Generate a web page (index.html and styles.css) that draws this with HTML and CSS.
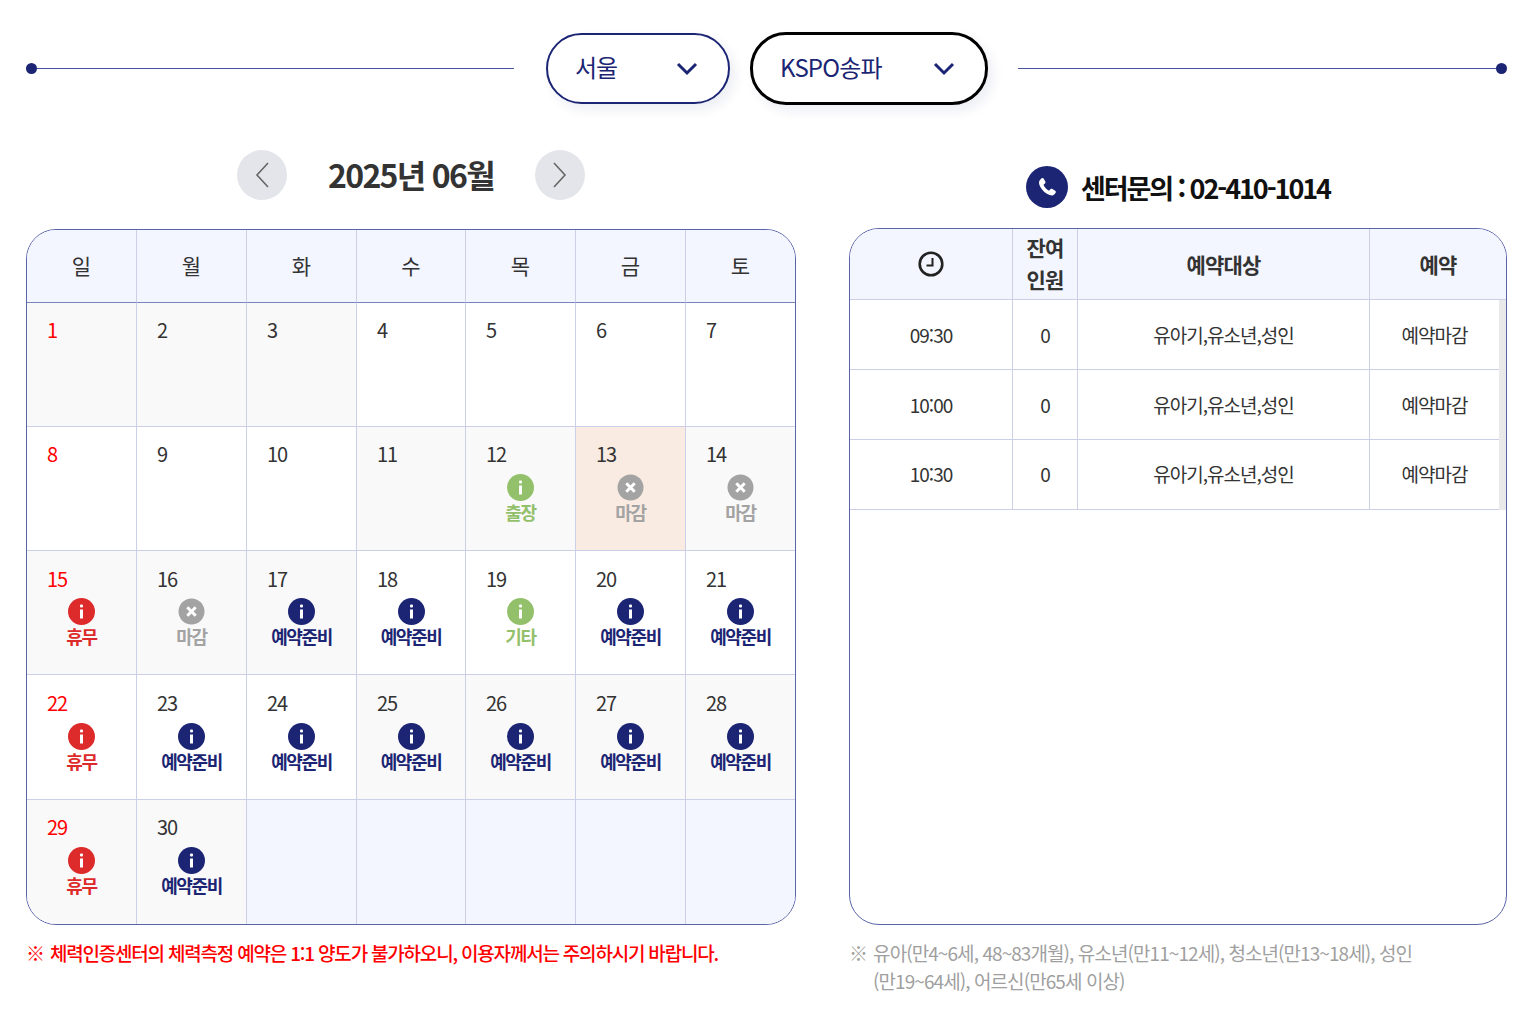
FILE: index.html
```html
<!DOCTYPE html>
<html lang="ko">
<head>
  <meta charset="UTF-8" />
  <meta name="viewport" content="width=device-width, initial-scale=1.0">
  <title>체력측정 예약</title>
  <link rel="stylesheet" href="styles.css">
</head>
<body>

  <svg class="defs" width="0" height="0">
    <symbol id="ico-info" viewBox="0 0 27 27">
      <circle cx="13.500" cy="13.500" r="13.500" fill="currentColor"/>
      <rect x="12" y="6.500" width="3" height="3" rx="1" fill="#fff"/>
      <rect x="12" y="11.500" width="3" height="9" fill="#fff"/>
    </symbol>
    <symbol id="ico-closed" viewBox="0 0 27 27">
      <circle cx="13.500" cy="13.500" r="13" fill="currentColor"/>
      <path d="M9.300 9.300l8.400 8.400M17.700 9.300l-8.400 8.400" fill="none" stroke="#fff" stroke-width="3"/>
    </symbol>
  </svg>

  <div class="select-row">
    <div class="select-line left"></div>
    <div class="select-box">
      <span>서울</span>
      <svg width="22" height="14" viewBox="0 0 22 14"><path d="M2 2l9 9 9-9" fill="none" stroke="#1b2573" stroke-width="3"/></svg>
    </div>
    <div class="select-box focus">
      <span>KSPO송파</span>
      <svg width="22" height="14" viewBox="0 0 22 14"><path d="M2 2l9 9 9-9" fill="none" stroke="#1b2573" stroke-width="3"/></svg>
    </div>
    <div class="select-line right"></div>
  </div>

  <main class="content">
    <section class="cal-side">
      <div class="month-bar">
        <a class="month-btn"><svg width="18" height="28" viewBox="0 0 18 28"><path d="M15 2L4 14l11 12" fill="none" stroke="#666" stroke-width="1.6"/></svg></a>
        <h2>2025년 06월</h2>
        <a class="month-btn"><svg width="18" height="28" viewBox="0 0 18 28"><path d="M3 2l11 12L3 26" fill="none" stroke="#666" stroke-width="1.6"/></svg></a>
      </div>

      <div class="calendar">
        <div class="cal-head">일</div>
        <div class="cal-head">월</div>
        <div class="cal-head">화</div>
        <div class="cal-head">수</div>
        <div class="cal-head">목</div>
        <div class="cal-head">금</div>
        <div class="cal-head">토</div>

        <div class="day gray sun"><b>1</b></div>
        <div class="day gray"><b>2</b></div>
        <div class="day gray"><b>3</b></div>
        <div class="day"><b>4</b></div>
        <div class="day"><b>5</b></div>
        <div class="day"><b>6</b></div>
        <div class="day"><b>7</b></div>

        <div class="day sun"><b>8</b></div>
        <div class="day"><b>9</b></div>
        <div class="day"><b>10</b></div>
        <div class="day gray"><b>11</b></div>
        <div class="day gray"><b>12</b><svg class="mark green"><use href="#ico-info"/></svg><em class="green">출장</em></div>
        <div class="day today"><b>13</b><svg class="mark closed"><use href="#ico-closed"/></svg><em class="closed">마감</em></div>
        <div class="day gray"><b>14</b><svg class="mark closed"><use href="#ico-closed"/></svg><em class="closed">마감</em></div>

        <div class="day gray sun"><b>15</b><svg class="mark red"><use href="#ico-info"/></svg><em class="red">휴무</em></div>
        <div class="day gray"><b>16</b><svg class="mark closed"><use href="#ico-closed"/></svg><em class="closed">마감</em></div>
        <div class="day gray"><b>17</b><svg class="mark navy"><use href="#ico-info"/></svg><em class="navy">예약준비</em></div>
        <div class="day"><b>18</b><svg class="mark navy"><use href="#ico-info"/></svg><em class="navy">예약준비</em></div>
        <div class="day"><b>19</b><svg class="mark green"><use href="#ico-info"/></svg><em class="green">기타</em></div>
        <div class="day"><b>20</b><svg class="mark navy"><use href="#ico-info"/></svg><em class="navy">예약준비</em></div>
        <div class="day"><b>21</b><svg class="mark navy"><use href="#ico-info"/></svg><em class="navy">예약준비</em></div>

        <div class="day sun"><b>22</b><svg class="mark red"><use href="#ico-info"/></svg><em class="red">휴무</em></div>
        <div class="day"><b>23</b><svg class="mark navy"><use href="#ico-info"/></svg><em class="navy">예약준비</em></div>
        <div class="day"><b>24</b><svg class="mark navy"><use href="#ico-info"/></svg><em class="navy">예약준비</em></div>
        <div class="day gray"><b>25</b><svg class="mark navy"><use href="#ico-info"/></svg><em class="navy">예약준비</em></div>
        <div class="day gray"><b>26</b><svg class="mark navy"><use href="#ico-info"/></svg><em class="navy">예약준비</em></div>
        <div class="day gray"><b>27</b><svg class="mark navy"><use href="#ico-info"/></svg><em class="navy">예약준비</em></div>
        <div class="day gray"><b>28</b><svg class="mark navy"><use href="#ico-info"/></svg><em class="navy">예약준비</em></div>

        <div class="day gray sun"><b>29</b><svg class="mark red"><use href="#ico-info"/></svg><em class="red">휴무</em></div>
        <div class="day gray"><b>30</b><svg class="mark navy"><use href="#ico-info"/></svg><em class="navy">예약준비</em></div>
        <div class="day empty"></div>
        <div class="day empty"></div>
        <div class="day empty"></div>
        <div class="day empty"></div>
        <div class="day empty"></div>
      </div>

      <p class="cal-note"><span>※</span> 체력인증센터의 체력측정 예약은 1:1 양도가 불가하오니, 이용자께서는 주의하시기 바랍니다.</p>
    </section>

    <section class="time-side">
      <div class="contact">
        <span class="phone-icon">
          <svg width="24" height="24" viewBox="0 0 24 24"><path d="M6.600 3.200c.7-.5 1.600-.3 2 .4l1.700 3c.4.6.2 1.300-.3 1.800L8.800 9.500c-.2.2-.3.5-.1.8.9 1.900 2.900 4.100 4.900 5.100.3.2.6.1.8-.1l1.200-1.200c.5-.5 1.200-.6 1.800-.2l2.800 1.800c.7.4.9 1.300.4 2-.8 1.200-2 2.800-3.700 2.700C11 20 4.400 13.200 4 8c-.1-2 1.300-3.800 2.600-4.800z" fill="#fff"/></svg>
        </span>
        <strong>센터문의 : 02-410-1014</strong>
      </div>

      <div class="time-table">
        <div class="time-head">
          <div class="tc c1">
            <svg width="28" height="28" viewBox="0 0 28 28"><circle cx="14" cy="14" r="11.300" fill="none" stroke="#222" stroke-width="2.600"/><path d="M15.500 8v7.500H9.500" fill="none" stroke="#222" stroke-width="2"/></svg>
          </div>
          <div class="tc c2">잔여<br>인원</div>
          <div class="tc c3">예약대상</div>
          <div class="tc c4">예약</div>
        </div>
        <div class="time-body">
          <div class="time-row">
            <div class="tc c1">09:30</div>
            <div class="tc c2">0</div>
            <div class="tc c3">유아기,유소년,성인</div>
            <div class="tc c4">예약마감</div>
          </div>
          <div class="time-row">
            <div class="tc c1">10:00</div>
            <div class="tc c2">0</div>
            <div class="tc c3">유아기,유소년,성인</div>
            <div class="tc c4">예약마감</div>
          </div>
          <div class="time-row">
            <div class="tc c1">10:30</div>
            <div class="tc c2">0</div>
            <div class="tc c3">유아기,유소년,성인</div>
            <div class="tc c4">예약마감</div>
          </div>
        </div>
      </div>

      <p class="time-note"><span>※</span><span>유아(만4~6세, 48~83개월), 유소년(만11~12세), 청소년(만13~18세), 성인<br>(만19~64세), 어르신(만65세 이상)</span></p>
    </section>
  </main>

</body>
</html>
```

FILE: styles.css
```css
* {
  margin: 0;
  padding: 0;
  box-sizing: border-box;
}

html, body {
  height: 100%;
  background: #fff;
  font-family: "Noto Sans CJK KR", "Noto Sans", sans-serif;
  color: #333;
}

body {
  padding: 32px 28px 0 26px;
  overflow: hidden;
}

.defs {
  display: block;
  height: 0;
}

/* select row */
.select-row {
  display: flex;
  align-items: center;
  height: 73px;
}

.select-line {
  position: relative;
  height: 1px;
  background: #4a55a0;
}

.select-line::after {
  content: "";
  position: absolute;
  top: -5px;
  width: 11px;
  height: 11px;
  border-radius: 50%;
  background: #1b2573;
}

.select-line.left { flex: 0 0 488px; margin-right: 32px; }
.select-line.left::after { left: 0; }
.select-line.right { flex: 1; margin-left: 30px; }
.select-line.right::after { right: 0; }

.select-box {
  width: 184px;
  height: 71px;
  border: 2px solid #1b2573;
  border-radius: 36px;
  padding: 0 30px 0 27px;
  display: flex;
  justify-content: space-between;
  align-items: center;
  font-size: 24px;
  letter-spacing: -1px;
  color: #1b2573;
  box-shadow: 5px 6px 12px rgba(27, 37, 115, 0.08);
}

.select-box span {
  padding-bottom: 4px;
}

.select-box.focus {
  width: 238px;
  height: 73px;
  margin-left: 20px;
  border: 3px solid #000;
  padding: 0 30px 0 27px;
  letter-spacing: -0.850px;
}

/* two columns */
.content {
  display: flex;
  align-items: flex-start;
  justify-content: space-between;
  margin-top: 45px;
}

.cal-side { width: 770px; }
.time-side { width: 658px; }

.month-bar {
  height: 50px;
  display: flex;
  align-items: center;
  justify-content: center;
  margin-bottom: 29px;
}

.month-bar h2 {
  width: 248px;
  padding-bottom: 2px;
  text-align: center;
  font-size: 32px;
  font-weight: 700;
  letter-spacing: -1.700px;
  color: #333;
}

.month-btn {
  width: 50px;
  height: 50px;
  border-radius: 50%;
  background: #e4e5ea;
  display: flex;
  align-items: center;
  justify-content: center;
}

/* calendar */
.calendar {
  display: grid;
  grid-template-columns: 110px 110px 110px 109px 110px 110px 109px;
  grid-template-rows: 73px 124px 124px 124px 125px 124px;
  height: 696px;
  border: 1px solid #5a64a8;
  border-radius: 30px;
  overflow: hidden;
}

.cal-head {
  background: #f3f6fe;
  border-right: 1px solid #ccd0e6;
  border-bottom: 1px solid #7a83bb;
  padding-bottom: 2px;
  display: flex;
  align-items: center;
  justify-content: center;
  font-size: 21px;
  color: #333;
}

.day {
  display: flex;
  flex-direction: column;
  align-items: center;
  padding-top: 13px;
  border-right: 1px solid #ccd0e6;
  border-bottom: 1px solid #ccd0e6;
  background: #fff;
}

.day:nth-child(n+22):nth-child(-n+35) { padding-top: 14px; }
.day:nth-child(n+22):nth-child(-n+28) .mark { margin-top: 5px; }

.cal-head:nth-child(7),
.day:nth-child(7n) { border-right: 0; }
.day:nth-last-child(-n+7) { border-bottom: 0; }

.day.gray { background: #f9f9f9; }
.day.today { background: #f9ebe1; }
.day.empty { background: #f3f6fe; }

.day b {
  align-self: flex-start;
  margin-left: 20px;
  height: 28px;
  line-height: 28px;
  font-size: 20px;
  font-weight: 400;
  letter-spacing: -1px;
  color: #333;
}

.day.sun b { color: #f00; }

.mark {
  width: 27px;
  height: 27px;
  margin-top: 6px;
  margin-bottom: -1px;
  display: block;
}

.navy { color: #1b2573; }
.green { color: #93c06a; }
.red { color: #dd2a2a; }
.closed { color: #a3a3a3; }

.day em {
  font-style: normal;
  font-size: 18px;
  font-weight: 700;
  letter-spacing: -1.400px;
  line-height: 24px;
}

.cal-note {
  margin-top: 13px;
  font-size: 19px;
  font-weight: 500;
  letter-spacing: -1.200px;
  color: #f00;
  line-height: 30px;
  white-space: nowrap;
}

.cal-note span { font-weight: 400; margin-right: 2px; }

/* time table */
.contact {
  height: 50px;
  margin-top: 12px;
  margin-bottom: 16px;
  padding-left: 177px;
  display: flex;
  align-items: center;
  gap: 13px;
}

.contact strong {
  font-size: 27px;
  font-weight: 700;
  letter-spacing: -2.100px;
  color: #111;
}

.phone-icon {
  width: 42px;
  height: 42px;
  border-radius: 50%;
  background: #1b2573;
  display: flex;
  align-items: center;
  justify-content: center;
}

.time-table {
  height: 697px;
  border: 1px solid #5a64a8;
  border-radius: 30px;
  overflow: hidden;
}

.time-head,
.time-row {
  display: flex;
}

.time-head {
  height: 71px;
  background: #f3f6fe;
  border-bottom: 1px solid #ccd0e6;
  font-size: 21px;
  font-weight: 700;
  letter-spacing: -0.800px;
  line-height: 32px;
  color: #333;
}

.time-head .c2 { padding-bottom: 2px; }

.time-body {
  border-right: 7px solid #e9e9e9;
  width: 656px;
}

.time-row {
  height: 70px;
  border-bottom: 1px solid #ccd0e6;
  font-size: 19px;
  letter-spacing: -1px;
  color: #333;
}

.time-row:nth-child(3) .tc { padding-bottom: 2px; }

.tc {
  display: flex;
  align-items: center;
  justify-content: center;
  text-align: center;
  border-right: 1px solid #ccd0e6;
}

.c1 { width: 163px; }
.c2 { width: 65px; }
.c3 { width: 292px; }
.c4 { flex: 1; border-right: 0; }

.time-note {
  display: flex;
  gap: 6px;
  margin-top: 14px;
  font-size: 19px;
  line-height: 28px;
  letter-spacing: -0.930px;
  color: #9f9f9f;
  white-space: nowrap;
}
```
